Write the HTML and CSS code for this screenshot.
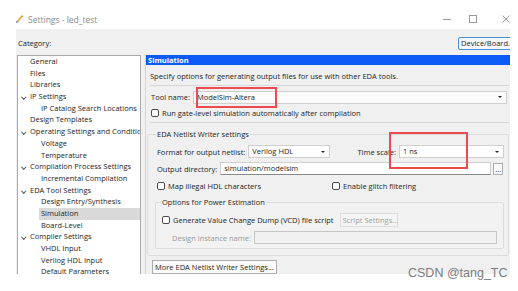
FILE: index.html
```html
<!DOCTYPE html>
<html lang="en">
<head>
<meta charset="UTF-8">
<meta name="viewport" content="width=device-width, initial-scale=1.0">
<title>Settings - led_test</title>
<link rel="stylesheet" href="styles.css">
</head>
<body>

<div class="titlebar">
    <svg class="app-icon" width="7" height="8" viewBox="0 0 7 8">
        <path d="M6.5 0.5 L1.5 6.5" stroke="#f0a030" stroke-width="1.6" fill="none"/>
        <path d="M1.6 6.3 L0.5 7.6" stroke="#3b78d8" stroke-width="1.4" fill="none"/>
    </svg>
    <span class="title">Settings - led_test</span>
    <div class="controls">
        <svg width="8" height="8" viewBox="0 0 8 8"><path d="M0 4.5 H8" stroke="#9a9a9a" stroke-width="1"/></svg>
        <svg width="8" height="8" viewBox="0 0 8 8"><rect x="0.5" y="0.5" width="7" height="7" stroke="#9a9a9a" fill="none"/></svg>
        <svg width="8" height="8" viewBox="0 0 8 8"><path d="M0.5 0.5 L7.5 7.5 M7.5 0.5 L0.5 7.5" stroke="#9a9a9a" stroke-width="1"/></svg>
    </div>
</div>

<div class="client">
    <div class="client-top">
        <span>Category:</span>
        <button class="btn device-btn">Device/Board...</button>
    </div>

    <div class="main">
        <ul class="tree">
            <li class="lv0">General</li>
            <li class="lv0">Files</li>
            <li class="lv0">Libraries</li>
            <li class="lv0 open">IP Settings</li>
            <li class="lv1">IP Catalog Search Locations</li>
            <li class="lv0">Design Templates</li>
            <li class="lv0 open">Operating Settings and Conditions</li>
            <li class="lv1">Voltage</li>
            <li class="lv1">Temperature</li>
            <li class="lv0 open">Compilation Process Settings</li>
            <li class="lv1">Incremental Compilation</li>
            <li class="lv0 open">EDA Tool Settings</li>
            <li class="lv1">Design Entry/Synthesis</li>
            <li class="lv1 selected">Simulation</li>
            <li class="lv1">Board-Level</li>
            <li class="lv0 open">Compiler Settings</li>
            <li class="lv1">VHDL Input</li>
            <li class="lv1">Verilog HDL Input</li>
            <li class="lv1">Default Parameters</li>
        </ul>

        <div class="page">
            <div class="page-head">Simulation</div>
            <p class="desc">Specify options for generating output files for use with other EDA tools.</p>
            <div class="sep"></div>

            <div class="row tool-row">
                <span class="label">Tool name:</span>
                <div class="combo tool-combo">ModelSim-Altera<span class="arrow"></span></div>
            </div>
            <div class="row check-row">
                <span class="box"></span>
                <span>Run gate-level simulation automatically after compilation</span>
            </div>
            <div class="sep"></div>

            <fieldset class="group">
                <legend>EDA Netlist Writer settings</legend>
                <div class="row field-row">
                    <span class="label">Format for output netlist:</span>
                    <div class="combo format-combo">Verilog HDL<span class="arrow"></span></div>
                    <span class="label scale-label">Time scale:</span>
                    <div class="combo scale-combo">1 ns<span class="arrow"></span></div>
                </div>
                <div class="row field-row out-row">
                    <span class="label">Output directory:</span>
                    <div class="input out-input">simulation/modelsim</div>
                    <button class="btn dots-btn">...</button>
                </div>
                <div class="row check-pair">
                    <div class="check-item first"><span class="box"></span><span>Map illegal HDL characters</span></div>
                    <div class="check-item"><span class="box"></span><span>Enable glitch filtering</span></div>
                </div>

                <fieldset class="group inner">
                    <legend>Options for Power Estimation</legend>
                    <div class="row vcd-row">
                        <span class="box"></span>
                        <span>Generate Value Change Dump (VCD) file script</span>
                        <button class="btn disabled script-btn">Script Settings...</button>
                    </div>
                    <div class="row inst-row">
                        <span class="label muted">Design instance name:</span>
                        <div class="input disabled-input"></div>
                    </div>
                </fieldset>
            </fieldset>

            <button class="btn more-btn">More EDA Netlist Writer Settings...</button>
        </div>
    </div>
</div>

<div class="mark mark-tool"></div>
<div class="mark mark-scale"></div>
<div class="watermark">CSDN @tang_TC</div>

</body>
</html>
```

FILE: styles.css
```css
body {
    margin: 0;
    width: 518px;
    height: 291px;
    overflow: hidden;
    position: relative;
    background-color: #fff;
    font-family: "Open Sans", "Noto Sans", sans-serif;
    font-size: 7.5px;
    color: #1e1e1e;
}
button {
    font-family: inherit;
    font-size: inherit;
    color: inherit;
}

/* title bar */
.titlebar {
    height: 29px;
    box-sizing: border-box;
    padding: 9px 8px 0 16px;
    display: flex;
    align-items: center;
}
.titlebar .title {
    margin-left: 5px;
    font-size: 8.5px;
    color: #8a8a8a;
}
.titlebar .controls {
    margin-left: auto;
    display: flex;
    gap: 18px;
}
.titlebar .controls svg:last-child {
    margin-left: 7px;
}

/* window client area */
.client {
    margin-left: 16px;
    width: 494px;
    height: 245px;
    background-color: #f0f0f0;
    overflow: hidden;
}
.client-top {
    height: 26px;
    box-sizing: border-box;
    padding: 2px 0 0 2px;
    display: flex;
    align-items: center;
}
.btn {
    height: 13px;
    padding: 0 2px;
    border: 1px solid #adadad;
    background-color: #f9f9f9;
    line-height: 11px;
    white-space: nowrap;
    flex-shrink: 0;
}
.device-btn {
    margin-left: auto;
    margin-right: -10px;
    width: 62px;
    text-align: left;
    border-color: #4a90d9;
    border-radius: 2px;
    background-color: #f4f8fc;
}
.main {
    display: flex;
    align-items: flex-start;
}

/* category tree */
.tree {
    list-style: none;
    margin: 0 0 0 1px;
    padding: 0;
    width: 122px;
    height: 240px;
    flex-shrink: 0;
    border: 1px solid #ababab;
    background-color: #fff;
}
.tree li {
    height: 11.7px;
    line-height: 11.7px;
    white-space: nowrap;
    overflow: hidden;
    position: relative;
}
.tree .lv0 {
    padding-left: 12px;
}
.tree .lv1 {
    margin-left: 21px;
    padding-left: 2px;
}
.tree .open::before {
    content: "";
    position: absolute;
    left: 4px;
    top: 4px;
    width: 2.5px;
    height: 2.5px;
    border-right: 1px solid #555;
    border-bottom: 1px solid #555;
    transform: rotate(45deg);
}
.tree .selected {
    background-color: #d9d9d9;
}

/* settings page */
.page {
    margin-left: 4px;
    width: 364px;
    height: 240px;
    flex-shrink: 0;
    border-left: 1px solid #d4d4d4;
}
.page-head {
    height: 10px;
    line-height: 10px;
    padding-left: 2px;
    background-color: #0b5cf6;
    color: #fff;
    font-weight: bold;
}
.desc {
    margin: 5px 0 0 4px;
    height: 12px;
    line-height: 12px;
}
.sep {
    margin: 3px 1px 0 4px;
    height: 1px;
    background-color: #d6d6d6;
}
.row {
    display: flex;
    align-items: center;
    white-space: nowrap;
}
.label {
    margin-right: 3px;
}
.muted {
    color: #9a9a9a;
}
.combo,
.input {
    height: 13px;
    box-sizing: border-box;
    padding-left: 3px;
    line-height: 11px;
    border: 1px solid #cfcfcf;
    background-color: #fff;
    position: relative;
    flex-shrink: 0;
}
.combo .arrow {
    position: absolute;
    right: 4px;
    top: 4.5px;
    border-left: 2px solid transparent;
    border-right: 2px solid transparent;
    border-top: 2.5px solid #222;
}
.box {
    width: 8px;
    height: 8px;
    box-sizing: border-box;
    border: 1px solid #4a4a4a;
    border-radius: 2px;
    background-color: #fff;
    margin-right: 3px;
    flex-shrink: 0;
}
.tool-row {
    margin: 5px 0 0 5px;
    height: 12px;
}
.tool-combo {
    width: 314px;
    margin-left: 0;
    background-color: #fafafa;
}
.check-row {
    margin: 4px 0 0 5px;
    height: 12px;
}

/* group boxes */
.group {
    margin: 6px 1px 0 1px;
    padding: 0 4px 6px 9px;
    border: 1px solid #dcdcdc;
    border-radius: 2px;
    min-width: 0;
}
.group legend {
    padding: 0 1px;
    margin-left: -1px;
    height: 10px;
    line-height: 10px;
}
.field-row {
    margin-top: 6px;
    height: 13px;
}
.format-combo {
    width: 82px;
}
.scale-label {
    margin-left: auto;
}
.scale-combo {
    width: 105px;
}
.out-row {
    margin-top: 4px;
}
.out-input {
    width: 271px;
    border-color: #cfcfcf #cfcfcf #8a8a8a;
}
.dots-btn {
    margin-left: 2px;
    width: 10px;
    height: 12px;
    padding: 0;
    line-height: 8px;
}
.check-pair {
    margin-top: 5px;
    height: 12px;
}
.check-item {
    display: flex;
    align-items: center;
}
.check-item.first {
    width: 175px;
}
.group.inner {
    margin: 5px 0 0 -2px;
    padding: 0 5px 4px 6px;
    background-color: #f2f2f2;
}
.vcd-row {
    margin-top: 6px;
    height: 14px;
}
.script-btn {
    margin-left: 6px;
    width: 58px;
    height: 14px;
    color: #a0a0a0;
    border-color: #dcdcdc;
    background-color: #f5f5f5;
}
.inst-row {
    margin: 4px 0 0 10px;
    height: 13px;
}
.disabled-input {
    width: 243px;
    background-color: #f0f0f0;
    border-color: #c6c6c6;
}
.more-btn {
    margin: 4px 0 0 6px;
    height: 14px;
    border-color: #adadad;
    background-color: #fbfbfb;
}

/* overlays: annotation boxes and watermark */
.mark {
    position: absolute;
    border: 2px solid #eb4b4e;
    box-sizing: border-box;
}
.mark-tool {
    left: 196px;
    top: 87px;
    width: 81px;
    height: 21px;
}
.mark-scale {
    left: 389px;
    top: 132px;
    width: 79px;
    height: 37px;
}
.watermark {
    position: absolute;
    left: 408px;
    top: 266px;
    font-family: "Liberation Sans", Arial, sans-serif;
    font-size: 12.5px;
    color: #7c7c7c;
    white-space: nowrap;
}
```
